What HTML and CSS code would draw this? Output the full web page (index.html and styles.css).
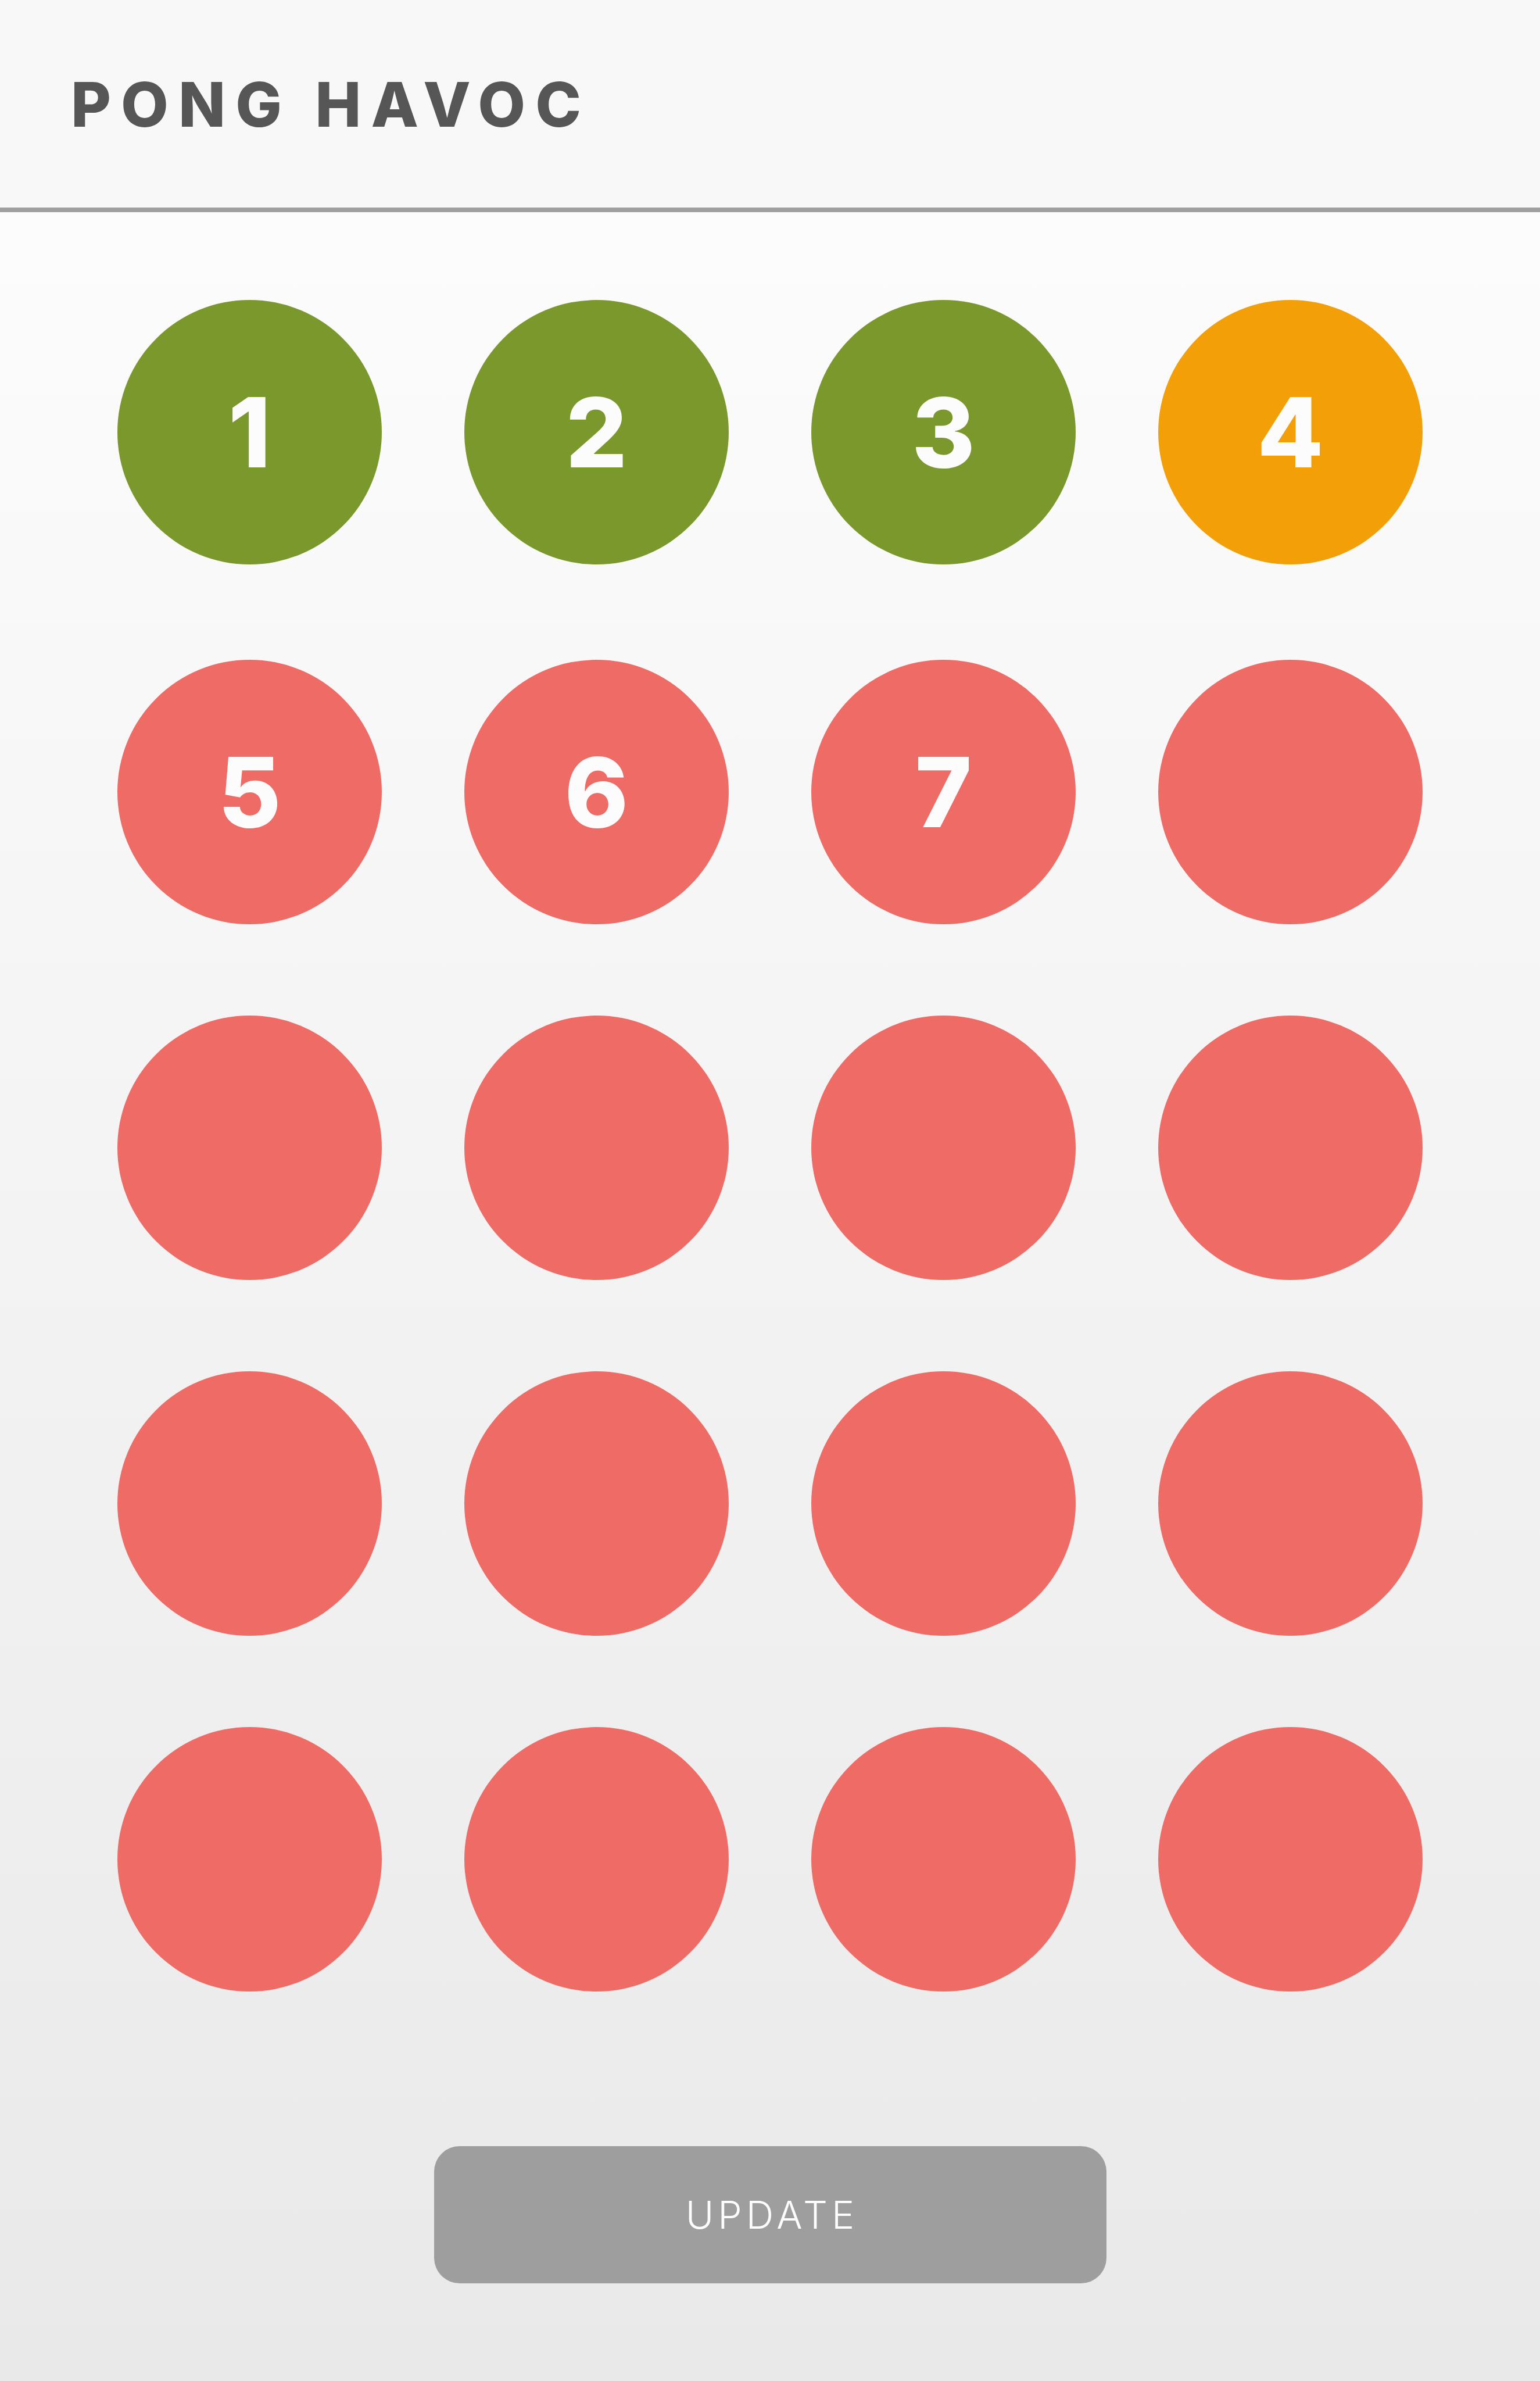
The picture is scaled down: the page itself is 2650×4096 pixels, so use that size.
FILE: index.html
```html
<!DOCTYPE html>
<html lang="en">
<head>
  <meta charset="utf-8">
  <meta name="viewport" content="width=device-width, initial-scale=1">
  <title>Pong Havoc</title>
  <link rel="stylesheet" href="styles.css">
</head>
<body>
  <header class="header">
    <h1 class="title">PONG HAVOC</h1>
  </header>
  <main class="board">
    <div class="rack">
      <div class="row row-front">
        <button type="button" class="cup cup-done">1</button>
        <button type="button" class="cup cup-done">2</button>
        <button type="button" class="cup cup-done">3</button>
        <button type="button" class="cup cup-active">4</button>
      </div>
      <div class="row">
        <button type="button" class="cup">5</button>
        <button type="button" class="cup">6</button>
        <button type="button" class="cup">7</button>
        <button type="button" class="cup" aria-label="Empty cup"></button>
      </div>
      <div class="row">
        <button type="button" class="cup" aria-label="Empty cup"></button>
        <button type="button" class="cup" aria-label="Empty cup"></button>
        <button type="button" class="cup" aria-label="Empty cup"></button>
        <button type="button" class="cup" aria-label="Empty cup"></button>
      </div>
      <div class="row">
        <button type="button" class="cup" aria-label="Empty cup"></button>
        <button type="button" class="cup" aria-label="Empty cup"></button>
        <button type="button" class="cup" aria-label="Empty cup"></button>
        <button type="button" class="cup" aria-label="Empty cup"></button>
      </div>
      <div class="row">
        <button type="button" class="cup" aria-label="Empty cup"></button>
        <button type="button" class="cup" aria-label="Empty cup"></button>
        <button type="button" class="cup" aria-label="Empty cup"></button>
        <button type="button" class="cup" aria-label="Empty cup"></button>
      </div>
    </div>
    <button type="button" class="update">UPDATE</button>
  </main>
</body>
</html>
```
FILE: styles.css
```css
* {
  box-sizing: border-box;
}

body {
  margin: 0;
  min-height: 100vh;
  display: flex;
  flex-direction: column;
  background: linear-gradient(#fefefe, #e9e9e9);
  font-family: Inter, "Open Sans", sans-serif;
}

.header {
  padding: 116px 122px 113px;
  background: #f8f8f8;
  border-bottom: 8px solid #9f9f9f;
}

.title {
  margin: 0;
  font-size: 106px;
  line-height: 128px;
  font-weight: 800;
  letter-spacing: 17px;
  color: #565656;
}

.board {
  flex: 1;
  display: flex;
  flex-direction: column;
  align-items: center;
  padding: 151px 202px 164px;
}

.rack {
  width: 100%;
  display: flex;
  flex-direction: column;
  gap: 157px;
}

.row {
  display: grid;
  grid-template-columns: repeat(4, 1fr);
  gap: 142px;
}

.row-front {
  padding-bottom: 7px;
}

.cup {
  display: flex;
  align-items: center;
  justify-content: center;
  aspect-ratio: 1;
  padding: 0;
  border: 0;
  border-radius: 50%;
  background: #ee6b66;
  color: #fcfcfc;
  font: inherit;
  font-size: 166px;
  line-height: 200px;
  font-weight: 800;
}

.cup-done {
  background: #7b982c;
}

.cup-active {
  background: #f29f08;
}

.update {
  width: 1157px;
  max-width: 100%;
  margin-top: 266px;
  padding: 78px 0;
  border: 0;
  border-radius: 44px;
  background: #9e9e9e;
  color: #fdfcff;
  font: inherit;
  font-size: 66px;
  line-height: 80px;
  font-weight: 300;
  letter-spacing: 7px;
  text-indent: 7px;
}
```
